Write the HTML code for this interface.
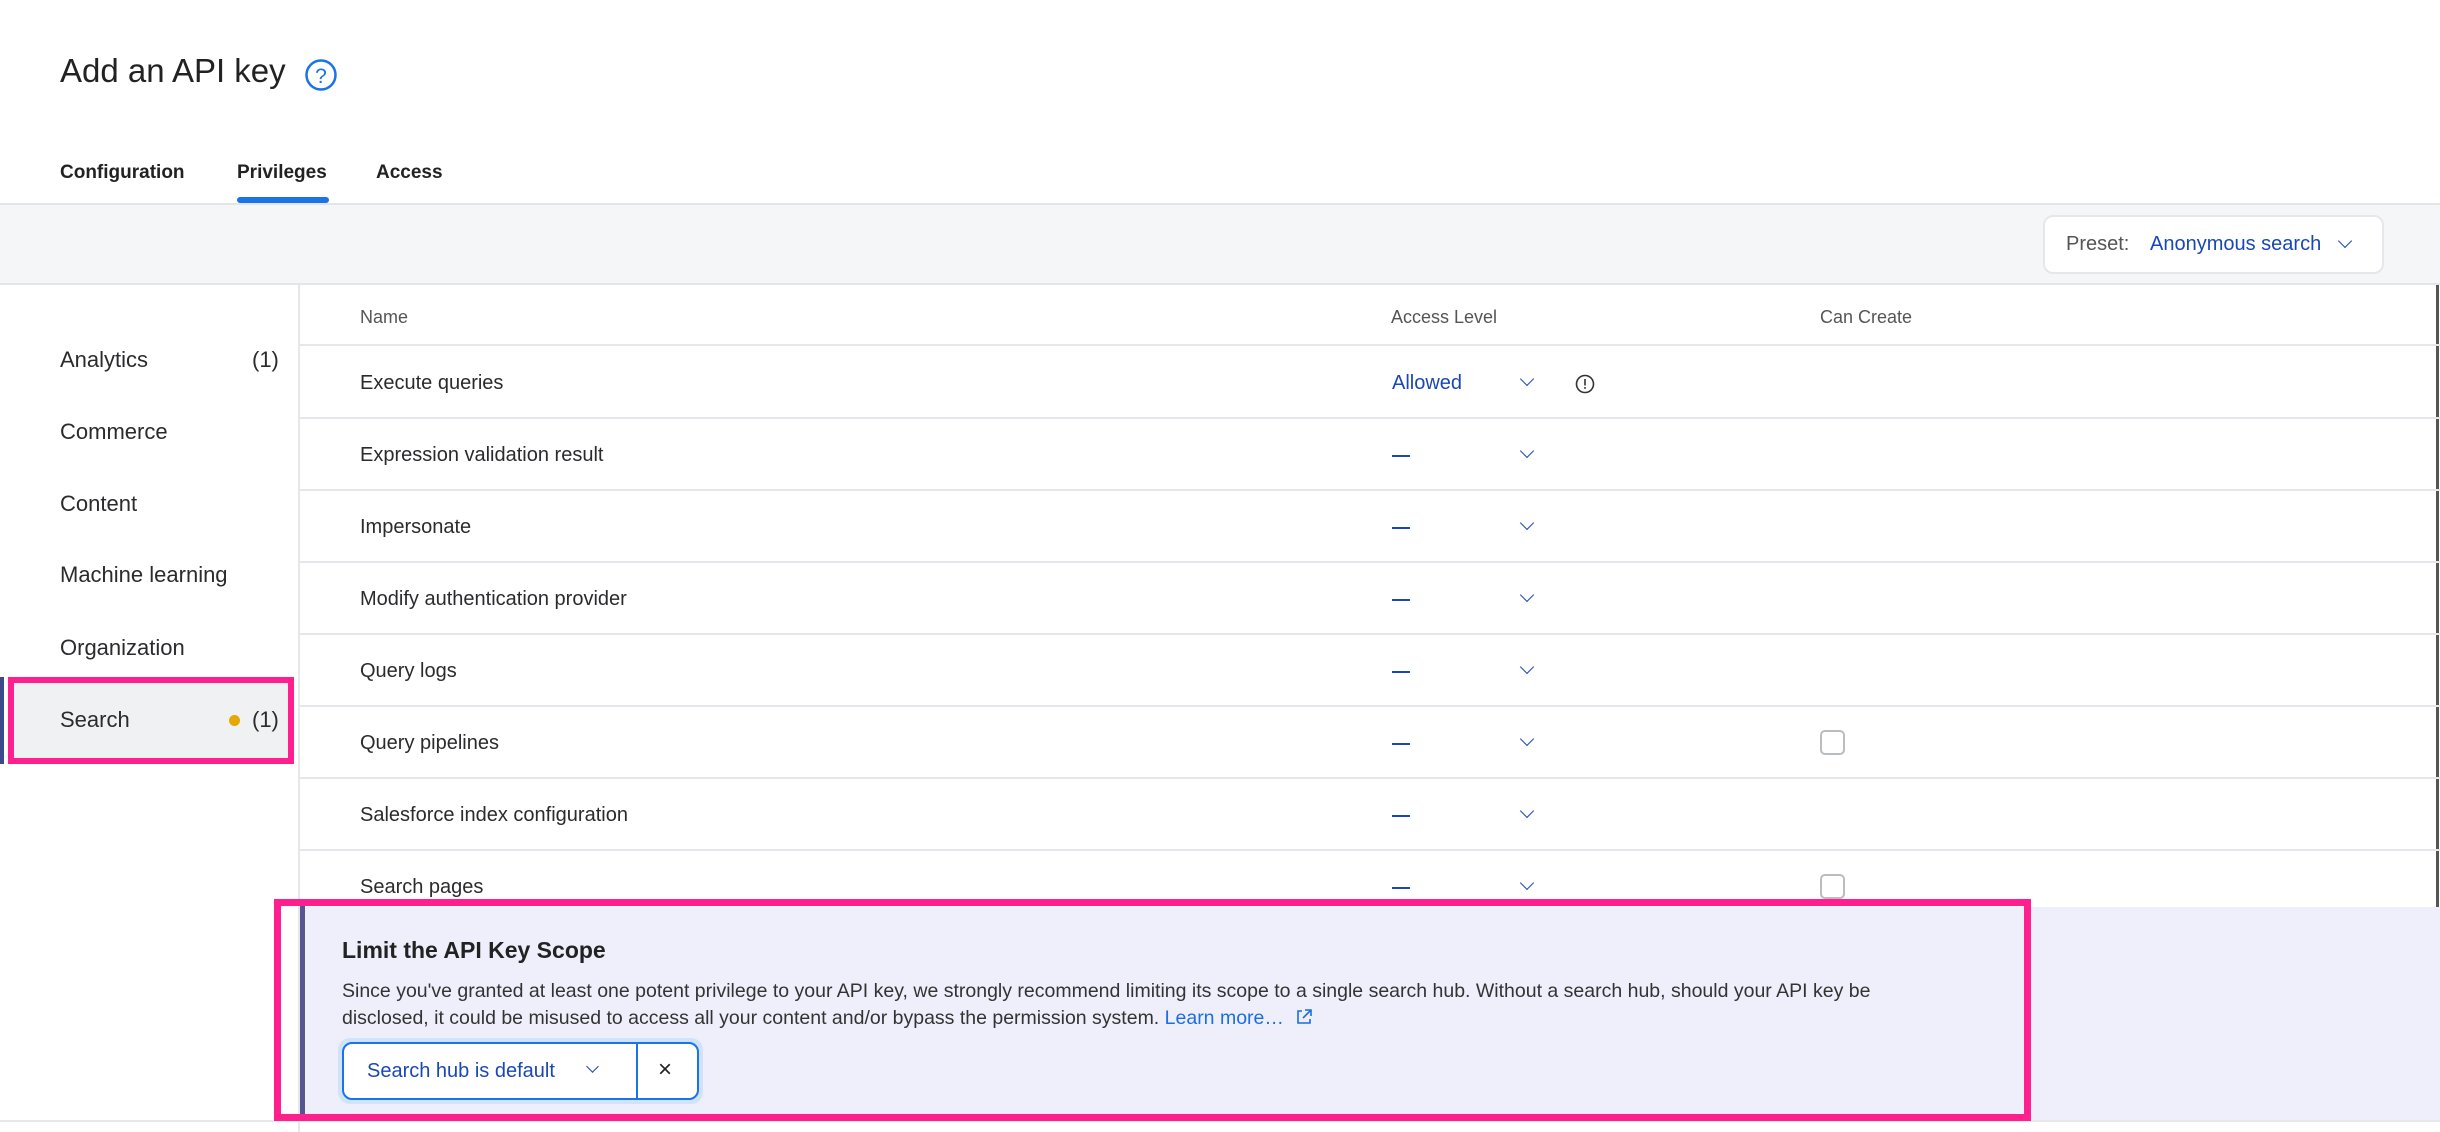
<!DOCTYPE html>
<html><head><meta charset="utf-8">
<style>
*{box-sizing:border-box;margin:0;padding:0}
body{width:2440px;height:1132px;overflow:hidden;background:#fff;font-family:"Liberation Sans",sans-serif;color:#282829;position:relative}
.a{position:absolute}
.t{font-size:22px;color:#2b2b2e;white-space:nowrap}
.blue{color:#1a47b8}
.chev{position:absolute;width:12px;height:12px;border-right:1.6px solid #1a47b8;border-bottom:1.6px solid #1a47b8;transform:rotate(45deg)}
.line{position:absolute;left:300px;right:0;height:2px;background:#e6e7ea}
.cb{position:absolute;width:25px;height:25px;border:2px solid #b9bcc2;border-radius:5px;background:#fff}
</style></head><body>
<div class="a" style="left:60px;top:52px;font-size:33px;color:#222">Add an API key</div>
<svg class="a" style="left:304px;top:58px" width="34" height="34" viewBox="0 0 34 34"><circle cx="17" cy="17" r="14.5" fill="none" stroke="#1a73e8" stroke-width="2.5"/><text x="17" y="25" text-anchor="middle" font-family="Liberation Sans" font-size="21" fill="#1a73e8">?</text></svg>

<div class="a" style="left:60px;top:162px;font-size:19px;font-weight:bold;color:#222">Configuration</div>
<div class="a" style="left:237px;top:162px;font-size:19px;font-weight:bold;color:#222">Privileges</div>
<div class="a" style="left:376px;top:162px;font-size:19px;font-weight:bold;color:#222">Access</div>
<div class="a" style="left:237px;top:197px;width:92px;height:6px;background:#1a73e8;border-radius:3px"></div>

<div class="a" style="left:0;top:203px;width:2440px;height:82px;background:#f5f6f8;border-top:2px solid #e4e5e8;border-bottom:2px solid #e4e5e8"></div>
<div class="a" style="left:2043px;top:215px;width:341px;height:59px;background:#fff;border:2px solid #e6e7ea;border-radius:10px"></div>
<div class="a t" style="left:2066px;top:233px;font-size:20px;color:#555">Preset:</div>
<div class="a t blue" style="left:2150px;top:233px;font-size:20px">Anonymous search</div>
<div class="chev" style="left:2340px;top:236px;width:10px;height:10px"></div>

<div class="a" style="left:298px;top:285px;width:2px;height:847px;background:#e6e7ea"></div>
<div class="a" style="left:2436px;top:285px;width:3px;height:695px;background:#555"></div>

<div class="a t" style="left:60px;top:347px">Analytics</div><div class="a t" style="left:252px;top:347px">(1)</div>
<div class="a t" style="left:60px;top:419px">Commerce</div>
<div class="a t" style="left:60px;top:491px">Content</div>
<div class="a t" style="left:60px;top:562px">Machine learning</div>
<div class="a t" style="left:60px;top:635px">Organization</div>
<div class="a" style="left:0;top:677px;width:4px;height:87px;background:#3a4a8a"></div>
<div class="a" style="left:8px;top:677px;width:286px;height:87px;background:#f0f1f3;border:6px solid #ff1f8e"></div>
<div class="a t" style="left:60px;top:707px">Search</div>
<div class="a" style="left:229px;top:715px;width:11px;height:11px;border-radius:50%;background:#e5a800"></div>
<div class="a t" style="left:252px;top:707px">(1)</div>

<div class="a" style="left:360px;top:307px;font-size:18px;color:#555">Name</div>
<div class="a" style="left:1391px;top:307px;font-size:18px;color:#555">Access Level</div>
<div class="a" style="left:1820px;top:307px;font-size:18px;color:#555">Can Create</div>
<div class="line" style="top:344px"></div>
<div class="line" style="top:417px"></div>
<div class="line" style="top:489px"></div>
<div class="line" style="top:561px"></div>
<div class="line" style="top:633px"></div>
<div class="line" style="top:705px"></div>
<div class="line" style="top:777px"></div>
<div class="line" style="top:849px"></div>

<div class="a t" style="left:360px;top:372px;font-size:20px">Execute queries</div>
<div class="a t blue" style="left:1392px;top:372px;font-size:20px">Allowed</div>
<div class="chev" style="left:1522px;top:374px;width:10px;height:10px"></div>
<svg class="a" style="left:1575px;top:374px" width="20" height="20" viewBox="0 0 20 20"><circle cx="10" cy="10" r="8.5" fill="none" stroke="#333" stroke-width="1.6"/><rect x="9.2" y="5" width="1.6" height="6.5" fill="#333"/><rect x="9.2" y="13" width="1.6" height="1.8" fill="#333"/></svg>

<div class="a t" style="left:360px;top:444px;font-size:20px">Expression validation result</div>
<div class="a t" style="left:360px;top:516px;font-size:20px">Impersonate</div>
<div class="a t" style="left:360px;top:588px;font-size:20px">Modify authentication provider</div>
<div class="a t" style="left:360px;top:660px;font-size:20px">Query logs</div>
<div class="a t" style="left:360px;top:732px;font-size:20px">Query pipelines</div>
<div class="a t" style="left:360px;top:804px;font-size:20px">Salesforce index configuration</div>
<div class="a t" style="left:360px;top:876px;font-size:20px">Search pages</div>

<div class="a" style="left:1392px;top:455px;width:18px;height:2px;background:#1a47b8"></div><div class="chev" style="left:1522px;top:446px;width:10px;height:10px"></div>
<div class="a" style="left:1392px;top:527px;width:18px;height:2px;background:#1a47b8"></div><div class="chev" style="left:1522px;top:518px;width:10px;height:10px"></div>
<div class="a" style="left:1392px;top:599px;width:18px;height:2px;background:#1a47b8"></div><div class="chev" style="left:1522px;top:590px;width:10px;height:10px"></div>
<div class="a" style="left:1392px;top:671px;width:18px;height:2px;background:#1a47b8"></div><div class="chev" style="left:1522px;top:662px;width:10px;height:10px"></div>
<div class="a" style="left:1392px;top:743px;width:18px;height:2px;background:#1a47b8"></div><div class="chev" style="left:1522px;top:734px;width:10px;height:10px"></div>
<div class="a" style="left:1392px;top:815px;width:18px;height:2px;background:#1a47b8"></div><div class="chev" style="left:1522px;top:806px;width:10px;height:10px"></div>
<div class="a" style="left:1392px;top:887px;width:18px;height:2px;background:#1a47b8"></div><div class="chev" style="left:1522px;top:878px;width:10px;height:10px"></div>
<div class="cb" style="left:1820px;top:730px"></div>
<div class="cb" style="left:1820px;top:874px"></div>

<div class="a" style="left:300px;top:907px;width:2140px;height:213px;background:#efeffc"></div>
<div class="a" style="left:0;top:1120px;width:2440px;height:2px;background:#e6e7ea"></div>
<div class="a" style="left:274px;top:899px;width:1757px;height:222px;border:7px solid #ff1f8e"></div>
<div class="a" style="left:300px;top:906px;width:5px;height:208px;background:#55558f"></div>
<div class="a" style="left:342px;top:937px;font-size:23px;font-weight:bold;color:#222">Limit the API Key Scope</div>
<div class="a" style="left:342px;top:978px;font-size:19.5px;line-height:27px;color:#333;width:1560px">Since you've granted at least one potent privilege to your API key, we strongly recommend limiting its scope to a single search hub. Without a search hub, should your API key be disclosed, it could be misused to access all your content and/or bypass the permission system. <span style="color:#1a6fe0">Learn more…</span> <svg width="18" height="18" viewBox="0 0 18 18" style="vertical-align:-2px;margin-left:6px"><path d="M7 3H3v12h12v-4M10 2h6v6M16 2L8 10" fill="none" stroke="#1a6fe0" stroke-width="1.6"/></svg></div>
<div class="a" style="left:338px;top:1038px;width:365px;height:66px;border-radius:12px;background:#cfe3fb"></div>
<div class="a" style="left:342px;top:1042px;width:357px;height:58px;border:2px solid #1a73e8;border-radius:10px;background:#fff"></div>
<div class="a" style="left:636px;top:1043px;width:2px;height:56px;background:#1a73e8"></div>
<div class="a t blue" style="left:367px;top:1060px;font-size:20px">Search hub is default</div>
<div class="chev" style="left:588px;top:1062px;width:9px;height:9px;border-width:1.4px"></div>
<div class="a" style="left:658px;top:1056px;font-size:24px;color:#222">×</div>
</body></html>
